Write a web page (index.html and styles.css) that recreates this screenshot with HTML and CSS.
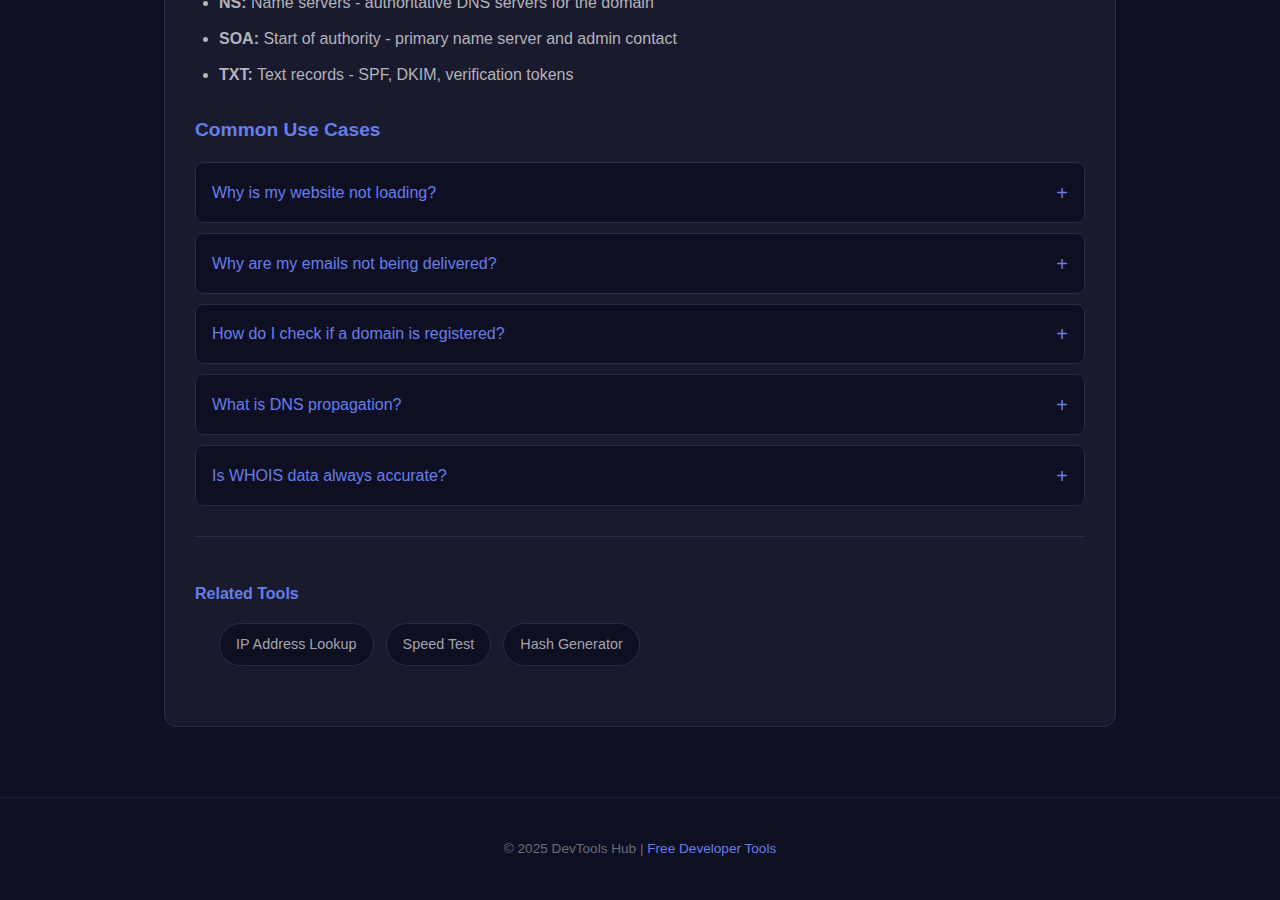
FILE: index.html
```html
<!DOCTYPE html>
<html lang="en">
<head>
    <meta charset="UTF-8">
    <meta name="viewport" content="width=device-width, initial-scale=1.0">
    <title>DNS Lookup - DevTools Hub</title>
    <link rel="stylesheet" href="styles.css">
</head>
<body>
    <main class="page">
        <section class="tool-card">
            <ul class="record-list">
                <li><strong>A:</strong> Maps a domain to an IPv4 address</li>
                <li><strong>AAAA:</strong> Maps a domain to an IPv6 address</li>
                <li><strong>CNAME:</strong> Alias pointing to another domain name</li>
                <li><strong>MX:</strong> Mail exchange servers for the domain</li>
                <li><strong>NS:</strong> Name servers - authoritative DNS servers for the domain</li>
                <li><strong>SOA:</strong> Start of authority - primary name server and admin contact</li>
                <li><strong>TXT:</strong> Text records - SPF, DKIM, verification tokens</li>
            </ul>

            <h3 class="section-title">Common Use Cases</h3>
            <div class="faq">
                <div class="faq-item">
                    <span class="faq-question">Why is my website not loading?</span>
                    <span class="faq-toggle">+</span>
                </div>
                <div class="faq-item">
                    <span class="faq-question">Why are my emails not being delivered?</span>
                    <span class="faq-toggle">+</span>
                </div>
                <div class="faq-item">
                    <span class="faq-question">How do I check if a domain is registered?</span>
                    <span class="faq-toggle">+</span>
                </div>
                <div class="faq-item">
                    <span class="faq-question">What is DNS propagation?</span>
                    <span class="faq-toggle">+</span>
                </div>
                <div class="faq-item">
                    <span class="faq-question">Is WHOIS data always accurate?</span>
                    <span class="faq-toggle">+</span>
                </div>
            </div>

            <hr class="divider">

            <div class="related">
                <h4>Related Tools</h4>
                <ul class="related-links">
                    <li><a href="#">IP Address Lookup</a></li>
                    <li><a href="#">Speed Test</a></li>
                    <li><a href="#">Hash Generator</a></li>
                </ul>
            </div>
        </section>
    </main>

    <footer class="site-footer">
        <p>&copy; 2025 DevTools Hub | <a href="#">Free Developer Tools</a></p>
    </footer>
</body>
</html>
```

FILE: styles.css
```css
:root {
    --bg-color: #0f0f23;
    --card-bg: #1a1a2e;
    --border-color: #2a2a4a;
    --accent: #667eea;
    --text-color: #b3b3ba;
    --muted: #6b6b75;
}
* {
    margin: 0;
    padding: 0;
    box-sizing: border-box;
}
body {
    font-family: 'Liberation Sans', Arial, Helvetica, sans-serif;
    background-color: var(--bg-color);
    color: var(--text-color);
}
.page {
    width: 952px;
    margin: -184px auto 0;
    padding-bottom: 70px;
}
.tool-card {
    background-color: var(--card-bg);
    border: 1px solid var(--border-color);
    border-radius: 12px;
    padding: 30px;
}
.record-list {
    padding-left: 24px;
    font-size: 16px;
    line-height: 24px;
}
.record-list li {
    margin-bottom: 12px;
}
.record-list li::marker {
    color: var(--text-color);
}
.section-title {
    color: var(--accent);
    font-size: 19.2px;
    line-height: 22px;
    margin: 32px 0 21px;
}
.faq-item {
    display: flex;
    justify-content: space-between;
    align-items: center;
    background-color: var(--bg-color);
    border: 1px solid var(--border-color);
    border-radius: 8px;
    padding: 20px 16px;
    margin-bottom: 10px;
    height: 60.75px;
}
.faq-question {
    color: var(--accent);
    font-size: 16px;
    padding-top: 1px;
}
.faq-toggle {
    color: var(--accent);
    font-size: 20px;
    line-height: 1;
    padding-top: 1px;
}
.divider {
    border: none;
    border-top: 1px solid var(--border-color);
    margin-top: 30px;
}
.related {
    padding-top: 48px;
}
.related h4 {
    color: var(--accent);
    font-size: 16px;
    line-height: 18px;
    margin-bottom: 20px;
}
.related-links {
    list-style: none;
    display: flex;
    gap: 12px;
    padding-left: 24px;
    margin-bottom: 30px;
}
.related-links a {
    display: block;
    padding: 12px 16px;
    font-size: 14.4px;
    line-height: 17px;
    color: #a3a3ab;
    text-decoration: none;
    background-color: var(--bg-color);
    border: 1px solid var(--border-color);
    border-radius: 50px;
}
.site-footer {
    border-top: 1px solid #1c1c36;
    padding: 43px 0 44px;
    text-align: center;
    font-size: 13.6px;
    color: var(--muted);
}
.site-footer a {
    color: var(--accent);
    text-decoration: none;
}
```
